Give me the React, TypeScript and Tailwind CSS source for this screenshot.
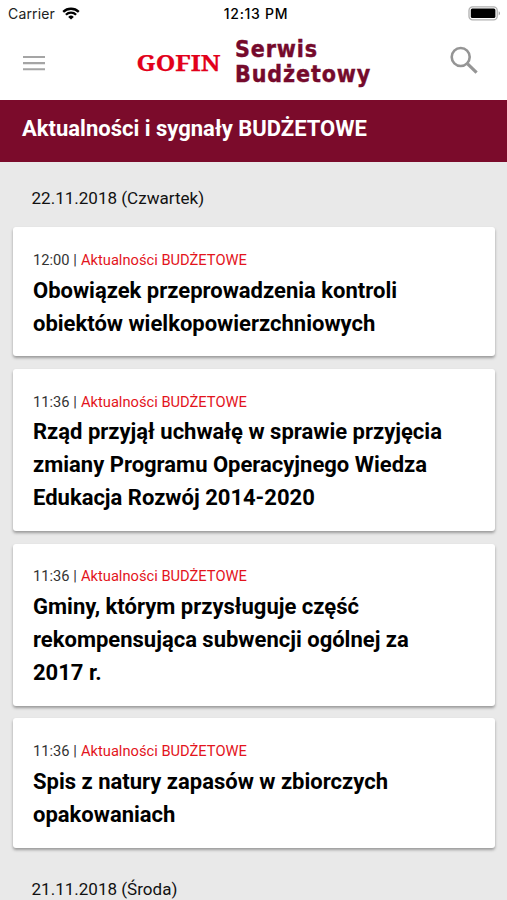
type NewsItem = { id: number; time: string; lines: string[] };

const CATEGORY = 'Aktualności BUDŻETOWE';

const NEWS: NewsItem[] = [
  { id: 1, time: '12:00', lines: ['Obowiązek przeprowadzenia kontroli', 'obiektów wielkopowierzchniowych'] },
  {
    id: 2,
    time: '11:36',
    lines: ['Rząd przyjął uchwałę w sprawie przyjęcia', 'zmiany Programu Operacyjnego Wiedza', 'Edukacja Rozwój 2014-2020'],
  },
  { id: 3, time: '11:36', lines: ['Gminy, którym przysługuje część', 'rekompensująca subwencji ogólnej za', '2017 r.'] },
  { id: 4, time: '11:36', lines: ['Spis z natury zapasów w zbiorczych', 'opakowaniach'] },
];

function StatusBar() {
  return (
    <div className="flex h-[27px] items-center justify-between pr-[6px] pl-[8px] font-[Inter,sans-serif] text-[14px] text-black">
      <div className="flex flex-1 items-center gap-[7px]">
        <span className="tracking-[0.15px] text-[#222]">Carrier</span>
        <svg width="18" height="13" viewBox="0 0 18 13" fill="none" stroke="#000" strokeWidth="2.3">
          <path d="M1.2 4.9a11.2 11.2 0 0 1 15.6 0" />
          <path d="M3.9 7.8a7.3 7.3 0 0 1 10.2 0" />
          <path d="M9 12.6 6.2 9.9a4 4 0 0 1 5.6 0z" fill="#000" stroke="none" />
        </svg>
      </div>
      <span className="pl-[3px] font-medium tracking-[0.7px]">12:13 PM</span>
      <div className="flex flex-1 justify-end">
        <svg width="33" height="15" viewBox="0 0 33 15">
          <rect x="1" y="0.8" width="28.2" height="13" rx="3.6" fill="none" stroke="#b0b0b0" strokeWidth="1.3" />
          <rect x="2.8" y="2.6" width="24.6" height="9.4" rx="1.5" fill="#000" />
          <path d="M30.7 5.2q1.3.5 1.3 2.1t-1.3 2.1z" fill="#a3a3a3" />
        </svg>
      </div>
    </div>
  );
}

function Logo() {
  return (
    <div className="flex w-[240px] items-start" role="img" aria-label="GOFIN Serwis Budżetowy">
      <svg width="101" height="52" viewBox="0 0 101 52" className="shrink-0">
        <text x="2.5" y="37" textLength="84" lengthAdjust="spacingAndGlyphs" fill="#e2001a" stroke="#e2001a" strokeWidth="0.25" className="font-['Noto_Serif','Liberation_Serif',serif] text-[22.5px] font-bold">
          GOFIN
        </text>
      </svg>
      <div className="mt-[3px] font-['DejaVu_Sans_Condensed','DejaVu_Sans',sans-serif] text-[23px] leading-[25px] font-bold tracking-[0.9px] text-[#750a2c] [-webkit-text-stroke:0.4px_#750a2c] [font-stretch:condensed]">
        <div>Serwis</div>
        <div>Budżetowy</div>
      </div>
    </div>
  );
}

function Header() {
  return (
    <header className="flex h-[73px] items-start bg-white">
      <button className="mt-[28px] ml-[22px]" aria-label="Menu">
        <svg width="24" height="16" viewBox="0 0 24 16" fill="none" stroke="#a5a5a5" strokeWidth="2.1" className="block">
          <path d="M1 2h22M1 8.1h22M1 14.3h22" />
        </svg>
      </button>
      <div className="mt-[7px] ml-[88px]">
        <Logo />
      </div>
      <button className="mt-[19px] ml-[76px]" aria-label="Szukaj">
        <svg width="28" height="28" viewBox="0 0 28 28" fill="none" stroke="#959595" className="block">
          <circle cx="10.7" cy="11" r="9" strokeWidth="2.6" />
          <path d="m17.6 17.9 9 8.8" strokeWidth="3.2" />
        </svg>
      </button>
    </header>
  );
}

function DateLabel({ children }: { children: string }) {
  return <div className="ml-[31.5px] text-[17.05px] leading-6 text-[#111]">{children}</div>;
}

function NewsCard({ item }: { item: NewsItem }) {
  return (
    <article className="rounded-[3px] bg-white px-[20px] pt-[22.8px] pb-[15.9px] shadow-[0_2px_3px_rgba(0,0,0,0.34)]">
      <p className="mb-[4.8px] text-[14.7px] leading-[20px] text-[#333]">
        {item.time} | <span className="ml-[0.5px] text-[#e3141c]">{CATEGORY}</span>
      </p>
      <h2 className="text-[22px] leading-[32.9px] font-bold text-black">
        {item.lines.map((line) => (
          <span key={line} className="block whitespace-nowrap">
            {line}
          </span>
        ))}
      </h2>
    </article>
  );
}

export default function App() {
  return (
    <div className="h-[900px] w-[507px] overflow-hidden bg-[#e9e9e9] font-[Roboto,sans-serif]">
      <div className="bg-white">
        <StatusBar />
        <Header />
      </div>
      <h1 className="flex h-[62px] items-center bg-[#7b0b2b] pb-[5px] pl-[22px] text-[22px] font-bold whitespace-nowrap text-white">
        Aktualności i sygnały BUDŻETOWE
      </h1>
      <main>
        <div className="pt-[24px] pb-[17px]">
          <DateLabel>22.11.2018 (Czwartek)</DateLabel>
        </div>
        <div className="flex flex-col gap-[12.5px] pr-[12px] pl-[13px]">
          {NEWS.map((item) => (
            <NewsCard key={item.id} item={item} />
          ))}
        </div>
        <div className="pt-[29px]">
          <DateLabel>21.11.2018 (Środa)</DateLabel>
        </div>
      </main>
    </div>
  );
}
